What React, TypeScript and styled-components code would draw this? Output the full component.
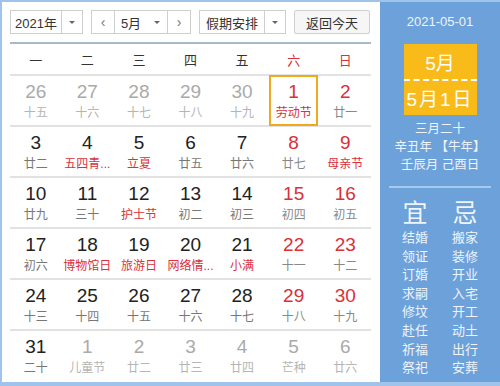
import styled, { createGlobalStyle } from 'styled-components';

const GlobalStyle = createGlobalStyle`
  body {
    margin: 0;
    font-family: "Liberation Sans", "Noto Sans CJK SC", sans-serif;
  }
`;

const Frame = styled.div`
  width: 500px;
  height: 386px;
  box-sizing: border-box;
  border: 2px solid #9fc3ea;
  border-bottom-width: 4px;
  border-right: none;
  background: #6ca1da;
  display: flex;
  overflow: hidden;
`;

const LeftSide = styled.div`
  width: 378px;
  background: #fff;
  padding: 8px 9px 0 8px;
  box-sizing: border-box;
`;

const Toolbar = styled.div`
  display: flex;
  gap: 8px;
  height: 24px;
  padding-bottom: 8px;
  border-bottom: 2px solid #a8b8cc;
`;

const Select = styled.div<{ $w: number }>`
  width: ${(p) => p.$w}px;
  height: 24px;
  box-sizing: border-box;
  border: 1px solid #cfcfcf;
  display: flex;
  font-size: 13px;
  color: #333;
  background: #fff;
`;

const SelectText = styled.div`
  flex: 1;
  display: flex;
  align-items: center;
  justify-content: center;
`;

const Caret = styled.div<{ $border?: boolean }>`
  width: 20px;
  display: flex;
  align-items: center;
  justify-content: center;
  border-left: ${(p) => (p.$border ? '1px solid #cfcfcf' : 'none')};
  &::after {
    content: '';
    border-left: 3px solid transparent;
    border-right: 3px solid transparent;
    border-top: 3px solid #666;
  }
`;

const Arrow = styled.div`
  width: 22px;
  display: flex;
  align-items: center;
  justify-content: center;
  color: #777;
  font-size: 14px;
  border-right: 1px solid #cfcfcf;
  &:last-child {
    border-right: none;
    border-left: 1px solid #cfcfcf;
  }
`;

const TodayButton = styled.div`
  width: 76px;
  height: 24px;
  box-sizing: border-box;
  border: 1px solid #cfcfcf;
  background: #f6f6f6;
  font-size: 13px;
  color: #333;
  display: flex;
  align-items: center;
  justify-content: center;
  border-radius: 2px;
`;

const Grid = styled.div`
  display: grid;
  grid-template-columns: repeat(7, 1fr);
  margin-top: 1px;
`;

const WeekDay = styled.div<{ $red?: boolean }>`
  height: 29px;
  display: flex;
  align-items: center;
  justify-content: center;
  font-size: 13px;
  color: ${(p) => (p.$red ? '#d9303a' : '#333')};
  border-bottom: 2px solid #e2e2e2;
`;

const Cell = styled.div<{ $last?: boolean; $active?: boolean }>`
  height: 49px;
  border-bottom: ${(p) => (p.$last ? 'none' : '2px solid #e2e2e2')};
  display: flex;
  flex-direction: column;
  align-items: center;
  justify-content: center;
  position: relative;
  &::after {
    content: '';
    display: ${(p) => (p.$active ? 'block' : 'none')};
    position: absolute;
    left: 1px;
    right: 1px;
    top: -1px;
    bottom: -1px;
    border: 2px solid #f0a81c;
  }
`;

const DayNum = styled.div<{ $tone: string }>`
  font-size: 19px;
  line-height: 20px;
  color: ${(p) => p.$tone};
`;

const Lunar = styled.div<{ $tone: string }>`
  font-size: 12px;
  line-height: 14px;
  margin-top: 4px;
  color: ${(p) => p.$tone};
  white-space: nowrap;
`;

const RightSide = styled.div`
  flex: 1;
  display: flex;
  flex-direction: column;
  align-items: center;
  color: #eef4fb;
  padding-top: 12px;
`;

const DateLine = styled.div`
  font-size: 13px;
  line-height: 16px;
`;

const DayBox = styled.div`
  margin-top: 14px;
  width: 73px;
  height: 71px;
  background: #f8bb1a;
  display: flex;
  flex-direction: column;
  color: #fff;
  font-size: 19px;
`;

const BoxHalf = styled.div<{ $top?: boolean }>`
  flex: 1;
  display: flex;
  align-items: center;
  justify-content: center;
  letter-spacing: ${(p) => (p.$top ? '0' : '2px')};
  border-bottom: ${(p) => (p.$top ? '2px dashed #fff' : 'none')};
`;

const LunarInfo = styled.div`
  margin-top: 5px;
  font-size: 12.5px;
  line-height: 18px;
  text-align: center;
`;

const Divider = styled.div`
  width: 102px;
  height: 2px;
  background: #a8c9ee;
  margin-top: 12px;
`;

const Advice = styled.div`
  display: flex;
  gap: 24px;
  margin-top: 10px;
`;

const AdviceCol = styled.div`
  display: flex;
  flex-direction: column;
  align-items: center;
`;

const AdviceHead = styled.div`
  font-size: 25px;
  line-height: 30px;
  margin-bottom: 1px;
`;

const AdviceItem = styled.div`
  font-size: 13px;
  line-height: 18.6px;
`;

type Day = { n: number; l: string; tone: 'dim' | 'red' | 'dark'; fest?: boolean; active?: boolean };

const D = (n: number, l: string, tone: Day['tone'], fest = false, active = false): Day => ({ n, l, tone, fest, active });

const days: Day[] = [
  D(26, '十五', 'dim'), D(27, '十六', 'dim'), D(28, '十七', 'dim'), D(29, '十八', 'dim'), D(30, '十九', 'dim'), D(1, '劳动节', 'red', true, true), D(2, '廿一', 'red'),
  D(3, '廿二', 'dark'), D(4, '五四青...', 'dark', true), D(5, '立夏', 'dark', true), D(6, '廿五', 'dark'), D(7, '廿六', 'dark'), D(8, '廿七', 'red'), D(9, '母亲节', 'red', true),
  D(10, '廿九', 'dark'), D(11, '三十', 'dark'), D(12, '护士节', 'dark', true), D(13, '初二', 'dark'), D(14, '初三', 'dark'), D(15, '初四', 'red'), D(16, '初五', 'red'),
  D(17, '初六', 'dark'), D(18, '博物馆日', 'dark', true), D(19, '旅游日', 'dark', true), D(20, '网络情...', 'dark', true), D(21, '小满', 'dark', true), D(22, '十一', 'red'), D(23, '十二', 'red'),
  D(24, '十三', 'dark'), D(25, '十四', 'dark'), D(26, '十五', 'dark'), D(27, '十六', 'dark'), D(28, '十七', 'dark'), D(29, '十八', 'red'), D(30, '十九', 'red'),
  D(31, '二十', 'dark'), D(1, '儿童节', 'dim'), D(2, '廿二', 'dim'), D(3, '廿三', 'dim'), D(4, '廿四', 'dim'), D(5, '芒种', 'dim'), D(6, '廿六', 'dim'),
];

const numColor = { dim: '#aaaaaa', red: '#d9303a', dark: '#222' };
const lunarColor = { dim: '#b5b5b5', red: '#888', dark: '#777' };

const weekDays = ['一', '二', '三', '四', '五', '六', '日'];
const good = ['结婚', '领证', '订婚', '求嗣', '修坟', '赴任', '祈福', '祭祀'];
const bad = ['搬家', '装修', '开业', '入宅', '开工', '动土', '出行', '安葬'];

export default function App() {
  return (
    <>
      <GlobalStyle />
      <Frame>
        <LeftSide>
          <Toolbar>
            <Select $w={73}>
              <SelectText>2021年</SelectText>
              <Caret $border />
            </Select>
            <Select $w={100}>
              <Arrow>&lsaquo;</Arrow>
              <SelectText>5月</SelectText>
              <Caret />
              <Arrow>&rsaquo;</Arrow>
            </Select>
            <Select $w={87}>
              <SelectText>假期安排</SelectText>
              <Caret $border />
            </Select>
            <TodayButton>返回今天</TodayButton>
          </Toolbar>
          <Grid>
            {weekDays.map((w, i) => (
              <WeekDay key={w} $red={i > 4}>{w}</WeekDay>
            ))}
            {days.map((d, i) => (
              <Cell key={i} $last={i >= 35} $active={d.active}>
                <DayNum $tone={numColor[d.tone]}>{d.n}</DayNum>
                <Lunar $tone={d.fest && d.tone !== 'dim' ? '#d9303a' : lunarColor[d.tone]}>{d.l}</Lunar>
              </Cell>
            ))}
          </Grid>
        </LeftSide>
        <RightSide>
          <DateLine>2021-05-01</DateLine>
          <DayBox>
            <BoxHalf $top>5月</BoxHalf>
            <BoxHalf>5月1日</BoxHalf>
          </DayBox>
          <LunarInfo>
            三月二十<br />
            辛丑年 【牛年】<br />
            壬辰月 己酉日
          </LunarInfo>
          <Divider />
          <Advice>
            <AdviceCol>
              <AdviceHead>宜</AdviceHead>
              {good.map((g) => <AdviceItem key={g}>{g}</AdviceItem>)}
            </AdviceCol>
            <AdviceCol>
              <AdviceHead>忌</AdviceHead>
              {bad.map((b) => <AdviceItem key={b}>{b}</AdviceItem>)}
            </AdviceCol>
          </Advice>
        </RightSide>
      </Frame>
    </>
  );
}
